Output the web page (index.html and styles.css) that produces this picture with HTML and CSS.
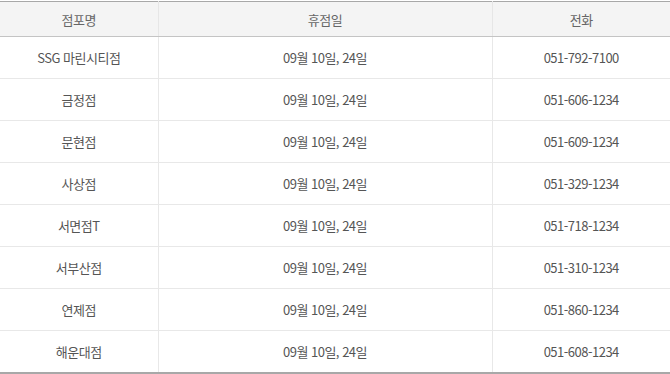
FILE: index.html
```html
<!DOCTYPE html>
<html lang="ko">
<head>
<meta charset="utf-8">
<link rel="stylesheet" href="styles.css">
</head>
<body>
<table class="stores">
  <colgroup>
    <col class="c1"><col class="c2"><col class="c3">
  </colgroup>
  <thead>
    <tr><th>점포명</th><th>휴점일</th><th>전화</th></tr>
  </thead>
  <tbody>
    <tr><td>SSG 마린시티점</td><td>09월 10일, 24일</td><td>051-792-7100</td></tr>
    <tr><td>금정점</td><td>09월 10일, 24일</td><td>051-606-1234</td></tr>
    <tr><td>문현점</td><td>09월 10일, 24일</td><td>051-609-1234</td></tr>
    <tr><td>사상점</td><td>09월 10일, 24일</td><td>051-329-1234</td></tr>
    <tr><td>서면점T</td><td>09월 10일, 24일</td><td>051-718-1234</td></tr>
    <tr><td>서부산점</td><td>09월 10일, 24일</td><td>051-310-1234</td></tr>
    <tr><td>연제점</td><td>09월 10일, 24일</td><td>051-860-1234</td></tr>
    <tr><td>해운대점</td><td>09월 10일, 24일</td><td>051-608-1234</td></tr>
  </tbody>
</table>
</body>
</html>
```
FILE: styles.css
```css
html, body {
  margin: 0;
  padding: 0;
  background: #fff;
}
body {
  padding-top: 1px;
  font-family: "Noto Sans CJK KR", "Noto Sans", sans-serif;
  font-size: 13px;
  color: #555;
  letter-spacing: -0.5px;
}
.stores {
  width: 670px;
  border-collapse: collapse;
  table-layout: fixed;
  border-top: 1px solid #a8a8a8;
  border-bottom: 2px solid #a8a8a8;
}
.c1 { width: 158px; }
.c2 { width: 334px; }
.c3 { width: 178px; }
.stores th {
  height: 34px;
  padding: 0;
  background: #f4f4f4;
  font-weight: normal;
  color: #666;
  border-bottom: 1px solid #c4c4c4;
  border-left: 1px solid #e6e6e6;
  text-align: center;
  vertical-align: middle;
}
.stores td {
  height: 41px;
  padding: 0;
  text-align: center;
  vertical-align: middle;
  border-top: 1px solid #e8e8e8;
  border-left: 1px solid #e8e8e8;
}
.stores th:first-child,
.stores td:first-child {
  border-left: none;
}
.stores tbody tr:first-child td {
  border-top: none;
}
```
